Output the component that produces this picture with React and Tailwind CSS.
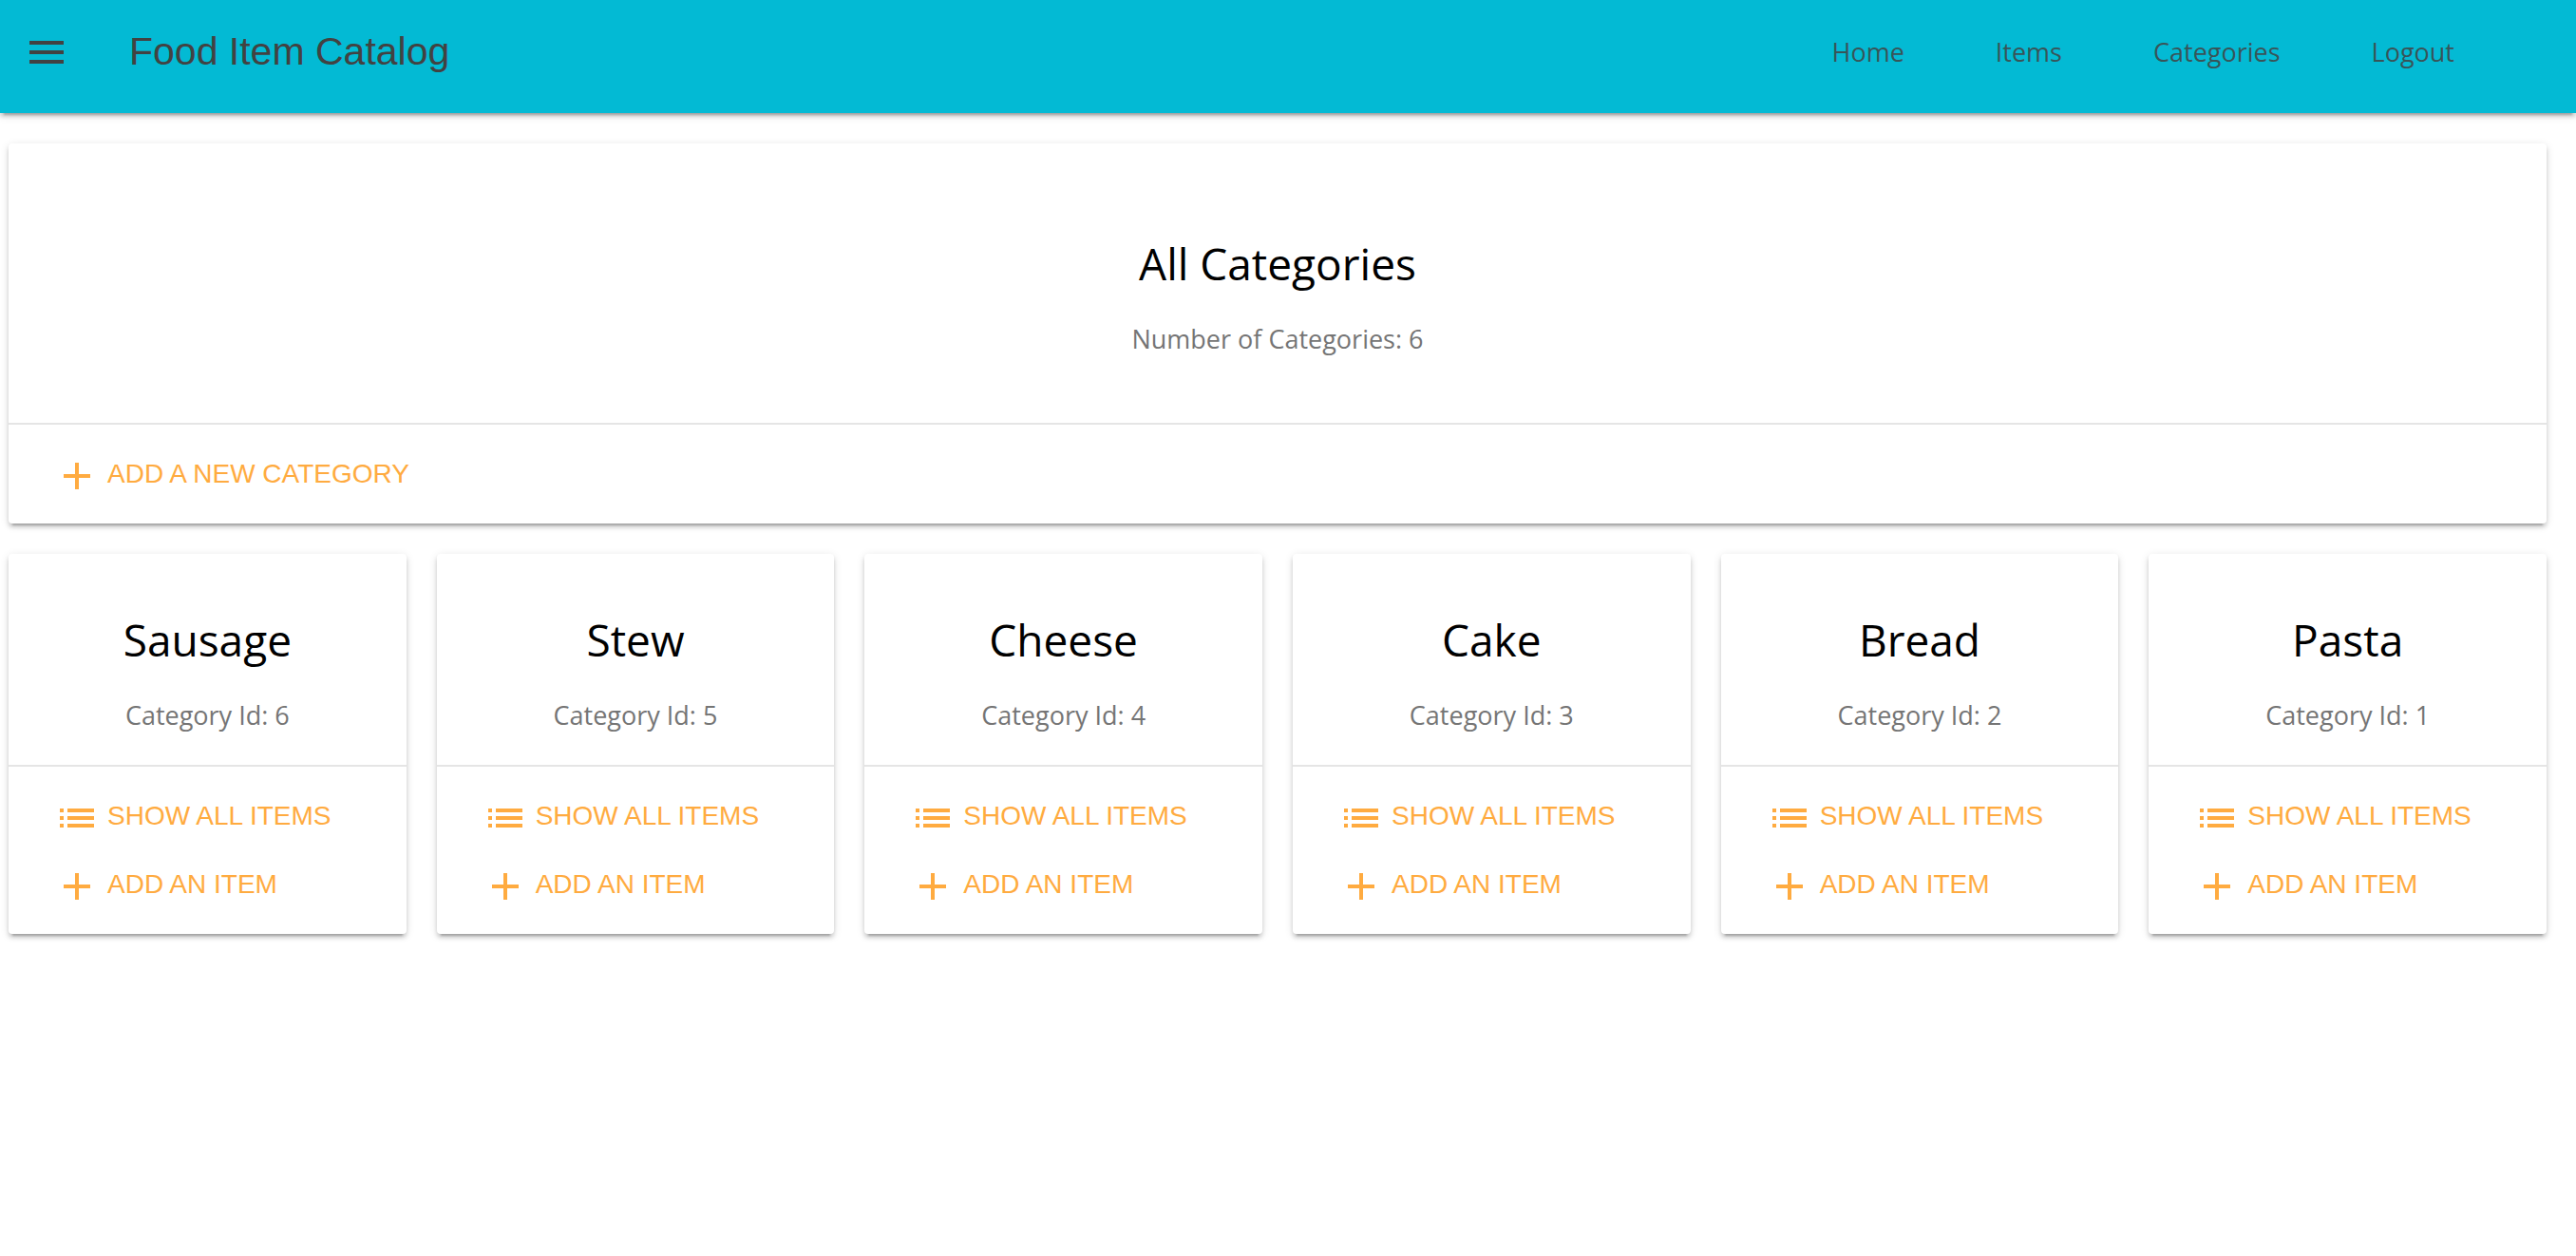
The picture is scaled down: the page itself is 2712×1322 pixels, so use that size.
import { MdAdd, MdList, MdMenu } from "react-icons/md";

const navLinks = ["Home", "Items", "Categories", "Logout"];

const categories = [
  { id: 6, name: "Sausage" },
  { id: 5, name: "Stew" },
  { id: 4, name: "Cheese" },
  { id: 3, name: "Cake" },
  { id: 2, name: "Bread" },
  { id: 1, name: "Pasta" },
];

function Card({ children }) {
  return (
    <section className="rounded bg-white shadow-[0_4px_4px_0_rgba(0,0,0,0.14),0_6px_2px_-4px_rgba(0,0,0,0.2),0_2px_10px_0_rgba(0,0,0,0.12)]">
      {children}
    </section>
  );
}

function CardActions({ children }) {
  return (
    <div className="flex flex-col items-start border-t-2 border-[#e5e5e5] p-4">
      {children}
    </div>
  );
}

function Action({ icon: Icon, children }) {
  return (
    <a
      href="#"
      className="flex h-[72px] items-center gap-2 px-8 text-[28px] whitespace-nowrap text-[#ffab40] uppercase"
    >
      <Icon className="mt-1 size-12 shrink-0" aria-hidden="true" />
      {children}
    </a>
  );
}

function Header() {
  return (
    <header className="flex h-[119px] items-start bg-[#03bad4] pr-20 text-[#424242] shadow-[0_4px_4px_0_rgba(0,0,0,0.14),0_6px_2px_-4px_rgba(0,0,0,0.2),0_2px_10px_0_rgba(0,0,0,0.12)]">
      <button type="button" aria-label="Open menu" className="flex h-[110px] w-[98px] items-center justify-center">
        <MdMenu className="size-12" />
      </button>
      <div className="ml-[38px] flex h-[110px] items-center text-[41px] whitespace-nowrap">Food Item Catalog</div>
      <nav className="ml-auto flex h-[110px] font-['Open_Sans',sans-serif] text-[27px] text-[#424242]/85">
        {navLinks.map((label) => (
          <a key={label} href="#" className="flex items-center px-12">
            {label}
          </a>
        ))}
      </nav>
    </header>
  );
}

export default function App() {
  return (
    <div className="min-h-screen bg-white font-['Liberation_Sans',Arial,sans-serif]">
      <Header />
      <main className="flex flex-col gap-8 pt-8 pr-[31px] pb-8 pl-[9px]">
        <Card>
          <div className="px-8 pt-[94px] pb-16 text-center font-['Open_Sans',sans-serif]">
            <h1 className="text-[46px] leading-[64px] text-black">All Categories</h1>
            <p className="mt-6 text-[27px] leading-[48px] text-[#757575]">Number of Categories: 6</p>
          </div>
          <CardActions>
            <Action icon={MdAdd}>Add a new category</Action>
          </CardActions>
        </Card>
        <div className="grid grid-cols-6 gap-8">
          {categories.map(({ id, name }) => (
            <Card key={id}>
              <div className="px-8 pt-[58px] pb-7 text-center font-['Open_Sans',sans-serif]">
                <h2 className="text-[46px] leading-[64px] text-black">{name}</h2>
                <p className="mt-6 text-[27px] leading-[48px] text-[#757575]">Category Id: {id}</p>
              </div>
              <CardActions>
                <Action icon={MdList}>Show all items</Action>
                <Action icon={MdAdd}>Add an item</Action>
              </CardActions>
            </Card>
          ))}
        </div>
      </main>
    </div>
  );
}
